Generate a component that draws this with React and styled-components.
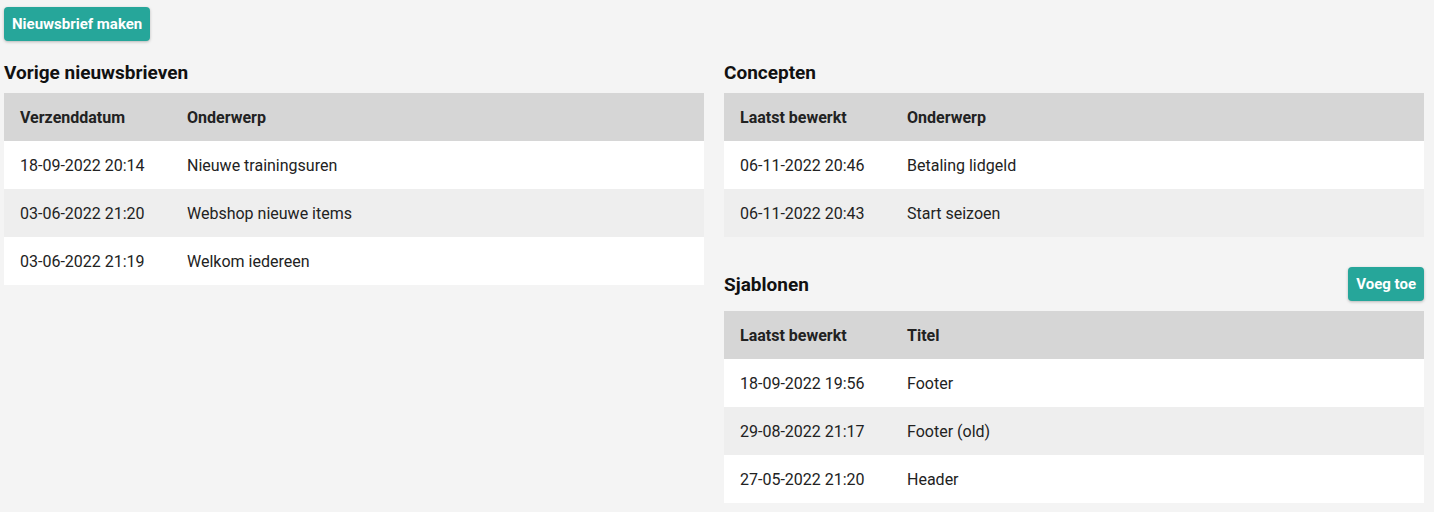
import React from "react";
import styled, { createGlobalStyle } from "styled-components";

const Global = createGlobalStyle`
  html, body { margin: 0; padding: 0; background: #f4f4f4; }
  body { font-family: Roboto, "Noto Sans", Arial, sans-serif; color: #1f1f1f; }
`;

const Page = styled.div`
  padding: 7px 10px 0 4px;
`;

const Button = styled.button`
  height: 34px;
  padding: 0 8px;
  border: none;
  border-radius: 4px;
  background: #26a69a;
  color: #fff;
  font-family: Roboto, Arial, sans-serif;
  font-weight: 700;
  font-size: 15px;
  box-shadow: 0 1px 3px rgba(0,0,0,0.25);
  cursor: pointer;
`;

const Columns = styled.div`
  display: grid;
  grid-template-columns: 1fr 1fr;
  column-gap: 20px;
  margin-top: 20px;
`;

const Column = styled.div`
  display: flex;
  flex-direction: column;
`;

const Title = styled.h3`
  margin: 0 0 8px;
  font-size: 19px;
  line-height: 24px;
  font-weight: 700;
  color: #111;
`;

const SectionHeader = styled.div`
  display: flex;
  align-items: center;
  justify-content: space-between;
  height: 34px;
  margin: 30px 0 10px;
  & > h3 { margin: 2px 0 0; }
`;

const Table = styled.table`
  width: 100%;
  border-collapse: collapse;
  table-layout: fixed;
  font-size: 16px;
`;

const Col = styled.col`
  width: ${(p) => p.$w || "auto"};
`;

const HeadCell = styled.th`
  height: 48px;
  padding: 0 16px;
  text-align: left;
  font-weight: 700;
  font-size: 16px;
  color: #222;
  background: #d6d6d6;
`;

const Row = styled.tr`
  background: ${(p) => (p.$alt ? "#eeeeee" : "#ffffff")};
`;

const Cell = styled.td`
  height: 48px;
  padding: 0 16px;
  color: #222;
`;

function DataTable({ cols, rows }) {
  return (
    <Table>
      <colgroup>
        <Col $w="167px" />
        <Col />
      </colgroup>
      <thead>
        <tr>
          <HeadCell>{cols[0]}</HeadCell>
          <HeadCell>{cols[1]}</HeadCell>
        </tr>
      </thead>
      <tbody>
        {rows.map((r, i) => (
          <Row key={i} $alt={i % 2 === 1}>
            <Cell>{r[0]}</Cell>
            <Cell>{r[1]}</Cell>
          </Row>
        ))}
      </tbody>
    </Table>
  );
}

export default function App() {
  return (
    <Page>
      <Global />
      <Button>Nieuwsbrief maken</Button>
      <Columns>
        <Column>
          <Title>Vorige nieuwsbrieven</Title>
          <DataTable
            cols={["Verzenddatum", "Onderwerp"]}
            rows={[
              ["18-09-2022 20:14", "Nieuwe trainingsuren"],
              ["03-06-2022 21:20", "Webshop nieuwe items"],
              ["03-06-2022 21:19", "Welkom iedereen"],
            ]}
          />
        </Column>
        <Column>
          <Title>Concepten</Title>
          <DataTable
            cols={["Laatst bewerkt", "Onderwerp"]}
            rows={[
              ["06-11-2022 20:46", "Betaling lidgeld"],
              ["06-11-2022 20:43", "Start seizoen"],
            ]}
          />
          <SectionHeader>
            <Title>Sjablonen</Title>
            <Button>Voeg toe</Button>
          </SectionHeader>
          <DataTable
            cols={["Laatst bewerkt", "Titel"]}
            rows={[
              ["18-09-2022 19:56", "Footer"],
              ["29-08-2022 21:17", "Footer (old)"],
              ["27-05-2022 21:20", "Header"],
            ]}
          />
        </Column>
      </Columns>
    </Page>
  );
}
